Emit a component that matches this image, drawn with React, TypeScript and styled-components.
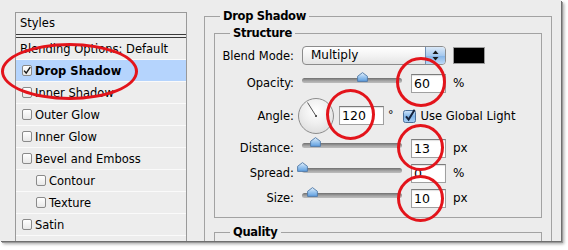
import React from 'react'
import styled, { createGlobalStyle } from 'styled-components'

const GlobalStyle = createGlobalStyle`
  html, body {
    margin: 0;
    padding: 0;
    background: #fff;
  }
  body {
    font-family: 'DejaVu Sans', 'Liberation Sans', sans-serif;
    font-size: 11.5px;
    color: #000;
  }
`

const Page = styled.div`
  position: relative;
  width: 568px;
  height: 250px;
  overflow: hidden;
  background: #fff;
`

const Window = styled.div`
  width: 561px;
  height: 241px;
  display: flex;
  align-items: flex-start;
  overflow: hidden;
  background: #ececec;
  box-shadow: 1px 1px 0 #6f6f6f, 2px 2px 0 #9a9a9a, 3px 3px 3px rgba(0, 0, 0, 0.35);
`

/* ---------- left list ---------- */

const StylesPanel = styled.div`
  box-sizing: border-box;
  width: 172px;
  height: 240px;
  margin: 12px 0 0 15px;
  border: 1px solid #999;
  border-bottom: none;
  background: #ededed;
`

const PanelHeader = styled.div`
  height: 21px;
  line-height: 21px;
  padding-left: 4px;
  border-bottom: 4px double #3a3a3a;
`

const StyleRow = styled.div<{ $indent?: number; $selected?: boolean; $bold?: boolean }>`
  display: flex;
  align-items: center;
  gap: 3px;
  height: 21px;
  padding-left: ${({ $indent }) => $indent ?? 4}px;
  border-bottom: 1px solid #fafafa;
  background: ${({ $selected }) => ($selected ? '#b5d4fd' : 'transparent')};
  font-weight: ${({ $bold }) => ($bold ? 'bold' : 'normal')};
  white-space: nowrap;
`

const SmallBox = styled.span`
  box-sizing: border-box;
  width: 10px;
  height: 11px;
  border: 1px solid #8a8a8a;
  border-radius: 2px;
  background: linear-gradient(#fff, #e8e8e8);
  display: flex;
  align-items: center;
  justify-content: center;
  flex-shrink: 0;
`

/* ---------- right side ---------- */

const GroupBox = styled.fieldset<{ $width: number; $top?: number }>`
  box-sizing: border-box;
  width: ${({ $width }) => $width}px;
  min-width: 0;
  margin: ${({ $top }) => $top ?? 0}px 0 0 0;
  padding: 0;
  border: 1px solid #a2a2a2;
`

const GroupTitle = styled.legend`
  margin-left: 15px;
  padding: 0 3px;
  line-height: 16px;
  font-weight: bold;
  letter-spacing: -0.3px;
`

const OuterBox = styled(GroupBox)`
  margin-left: 17px;
  margin-top: 8px;
  height: 260px;
`

const InnerBox = styled(GroupBox)`
  margin-left: 9px;
`

const Rows = styled.div<{ $h?: number }>`
  display: flex;
  flex-direction: column;
  padding-bottom: 6px;
  min-height: ${({ $h }) => $h ?? 0}px;
`

const Row = styled.div<{ $h: number }>`
  display: grid;
  grid-template-columns: 79px 1fr;
  column-gap: 8px;
  align-items: center;
  height: ${({ $h }) => $h}px;
`

const Label = styled.span`
  text-align: right;
  white-space: nowrap;
`

const Controls = styled.div`
  display: flex;
  align-items: center;
`

const Select = styled.div`
  box-sizing: border-box;
  display: flex;
  align-items: stretch;
  width: 144px;
  height: 19px;
  border: 1px solid #8c8c8c;
  border-radius: 4px;
  overflow: hidden;
  background: linear-gradient(#fff, #f3f3f3 50%, #e4e4e4);
`

const SelectText = styled.span`
  flex: 1;
  padding-left: 8px;
  line-height: 17px;
  font-size: 12px;
`

const SelectArrow = styled.span`
  width: 19px;
  border-left: 1px solid #6f8fb5;
  background: linear-gradient(#dbe9f8, #a6c9ee 50%, #84b4e7 51%, #bcd9f7);
  display: flex;
  align-items: center;
  justify-content: center;
`

const Swatch = styled.span`
  box-sizing: border-box;
  width: 32px;
  height: 17px;
  margin-left: 7px;
  border: 1px solid #9a9a9a;
  background: #000;
`

const SliderWrap = styled.div<{ $w: number }>`
  position: relative;
  width: ${({ $w }) => $w}px;
  height: 5px;
  margin-bottom: 6px;
  border-radius: 3px;
  background: linear-gradient(#6f6f6f, #a9a9a9 60%, #bdbdbd);
`

const Thumb = styled.svg`
  position: absolute;
  top: -6px;
  width: 11px;
  height: 10px;
  margin-left: -5.5px;
`

const NumberBox = styled.div<{ $w: number; $gap: number }>`
  box-sizing: border-box;
  width: ${({ $w }) => $w}px;
  height: 19px;
  margin-left: ${({ $gap }) => $gap}px;
  padding-left: 2px;
  border: 1px solid #a0a0a0;
  border-top-color: #7c7c7c;
  background: #fff;
  box-shadow: inset 0 1px 1px rgba(0, 0, 0, 0.12);
  line-height: 17px;
  font-size: 12.5px;
`

const Unit = styled.span`
  margin-left: 7px;
  font-size: 12px;
`

const Dial = styled.div`
  box-sizing: border-box;
  width: 36px;
  height: 36px;
  margin-left: -4px;
  border: 1px solid #8d8d8d;
  border-radius: 50%;
  background: radial-gradient(circle at 50% 35%, #fff 0%, #efefef 45%, #d6d6d6 100%);
  display: flex;
`

const Degree = styled.span`
  margin-left: 4px;
  align-self: flex-start;
  margin-top: 10px;
  font-size: 11px;
`

const CheckLabel = styled.label`
  display: flex;
  align-items: center;
  gap: 5px;
  margin-left: 9px;
  font-size: 11.6px;
  white-space: nowrap;
`

const Ring = styled.div<{ $x: number; $y: number; $w: number; $h: number }>`
  position: absolute;
  left: ${({ $x }) => $x}px;
  top: ${({ $y }) => $y}px;
  width: ${({ $w }) => $w}px;
  height: ${({ $h }) => $h}px;
  box-sizing: border-box;
  border: 3px solid #e3141b;
  border-radius: 50%;
  pointer-events: none;
`

const ThumbIcon = ({ pct }: { pct: number }) => (
  <Thumb viewBox="0 0 11 10" style={{ left: `${pct}%` }}>
    <defs>
      <linearGradient id="tg" x1="0" y1="0" x2="0" y2="1">
        <stop offset="0" stopColor="#e3f0fc" />
        <stop offset="0.5" stopColor="#9cc6ee" />
        <stop offset="1" stopColor="#5d9ee0" />
      </linearGradient>
    </defs>
    <path d="M5.5 0.6 L10.4 4.3 V9.4 H0.6 V4.3 Z" fill="url(#tg)" stroke="#4f78a6" strokeWidth="0.9" />
  </Thumb>
)

const Slider = ({ pct, w = 100 }: { pct: number; w?: number }) => (
  <SliderWrap $w={w}>
    <ThumbIcon pct={pct} />
  </SliderWrap>
)

const Check = () => (
  <svg width="9" height="9" viewBox="0 0 9 9">
    <path d="M1.2 4.6 L3.6 7.4 L8.2 0.6" fill="none" stroke="#1b1b1b" strokeWidth="1.6" />
  </svg>
)

const BlueCheckbox = () => (
  <svg width="13" height="14" viewBox="0 0 13 14">
    <defs>
      <linearGradient id="bc" x1="0" y1="0" x2="0" y2="1">
        <stop offset="0" stopColor="#cfe4f9" />
        <stop offset="0.5" stopColor="#7fb4e8" />
        <stop offset="1" stopColor="#a9d0f5" />
      </linearGradient>
    </defs>
    <rect x="0.5" y="1.5" width="12" height="12" rx="2" fill="url(#bc)" stroke="#4a6e98" />
    <path d="M3 7.4 L5.6 10.6 L11.6 0.8" fill="none" stroke="#14213a" strokeWidth="2" />
  </svg>
)

const SelectArrows = () => (
  <svg width="7" height="11" viewBox="0 0 7 11">
    <path d="M3.5 0.5 L6.5 4 H0.5 Z" fill="#1a1a1a" />
    <path d="M3.5 10.5 L6.5 7 H0.5 Z" fill="#1a1a1a" />
  </svg>
)

const DialFace = () => (
  <svg width="34" height="34" viewBox="0 0 34 34">
    <line x1="17" y1="17" x2="8.5" y2="3.5" stroke="#555" strokeWidth="1" />
    <rect x="16" y="16" width="2" height="2" fill="#555" />
  </svg>
)

const styleItems: { label: string; indent?: number; checked?: boolean }[] = [
  { label: 'Drop Shadow', checked: true },
  { label: 'Inner Shadow' },
  { label: 'Outer Glow' },
  { label: 'Inner Glow' },
  { label: 'Bevel and Emboss' },
  { label: 'Contour', indent: 20 },
  { label: 'Texture', indent: 20 },
  { label: 'Satin' },
]

export default function App() {
  return (
    <Page>
      <GlobalStyle />
      <Window>
        <StylesPanel>
          <PanelHeader>Styles</PanelHeader>
          <StyleRow>Blending Options: Default</StyleRow>
          {styleItems.map((item) => (
            <StyleRow
              key={item.label}
              $indent={item.indent ?? 6}
              $selected={item.checked}
              $bold={item.checked}
            >
              <SmallBox>{item.checked && <Check />}</SmallBox>
              {item.label}
            </StyleRow>
          ))}
          <StyleRow $indent={6}>
            <SmallBox />
          </StyleRow>
        </StylesPanel>

        <OuterBox $width={348}>
          <GroupTitle>Drop Shadow</GroupTitle>
          <InnerBox $width={328} $top={1}>
            <GroupTitle>Structure</GroupTitle>
            <Rows>
              <Row $h={29}>
                <Label>Blend Mode:</Label>
                <Controls>
                  <Select>
                    <SelectText>Multiply</SelectText>
                    <SelectArrow>
                      <SelectArrows />
                    </SelectArrow>
                  </Select>
                  <Swatch />
                </Controls>
              </Row>
              <Row $h={26}>
                <Label>Opacity:</Label>
                <Controls>
                  <Slider pct={60} />
                  <NumberBox $w={35} $gap={9}>60</NumberBox>
                  <Unit>%</Unit>
                </Controls>
              </Row>
              <Row $h={39}>
                <Label>Angle:</Label>
                <Controls>
                  <Dial>
                    <DialFace />
                  </Dial>
                  <NumberBox $w={45} $gap={5}>120</NumberBox>
                  <Degree>°</Degree>
                  <CheckLabel>
                    <BlueCheckbox />
                    Use Global Light
                  </CheckLabel>
                </Controls>
              </Row>
              <Row $h={26}>
                <Label>Distance:</Label>
                <Controls>
                  <Slider pct={13} />
                  <NumberBox $w={35} $gap={9}>13</NumberBox>
                  <Unit>px</Unit>
                </Controls>
              </Row>
              <Row $h={24}>
                <Label>Spread:</Label>
                <Controls>
                  <Slider pct={0} />
                  <NumberBox $w={35} $gap={9}>0</NumberBox>
                  <Unit>%</Unit>
                </Controls>
              </Row>
              <Row $h={26}>
                <Label>Size:</Label>
                <Controls>
                  <Slider pct={10} />
                  <NumberBox $w={35} $gap={9}>10</NumberBox>
                  <Unit>px</Unit>
                </Controls>
              </Row>
            </Rows>
          </InnerBox>
          <InnerBox $width={328} $top={6}>
            <GroupTitle>Quality</GroupTitle>
            <Rows $h={40} />
          </InnerBox>
        </OuterBox>
      </Window>

      <Ring $x={1} $y={43} $w={137} $h={57} />
      <Ring $x={396} $y={57} $w={50} $h={50} />
      <Ring $x={326} $y={89} $w={49} $h={51} />
      <Ring $x={397} $y={124} $w={47} $h={47} />
      <Ring $x={397} $y={175} $w={47} $h={47} />
    </Page>
  )
}
